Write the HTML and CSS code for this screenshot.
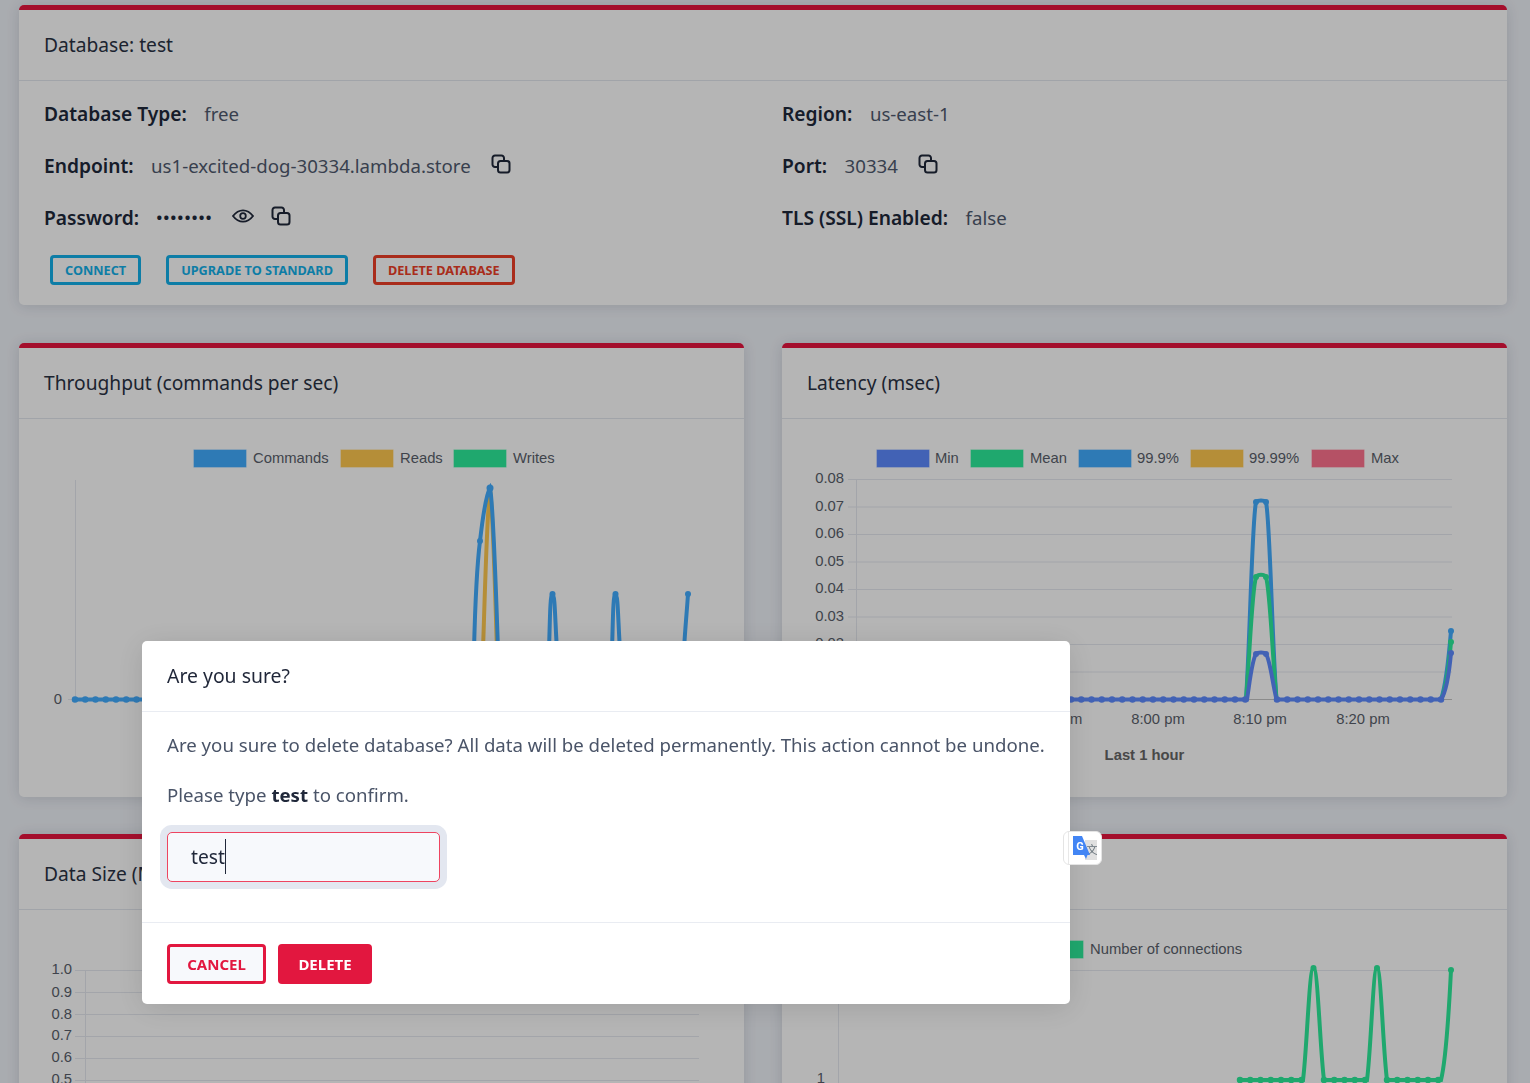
FILE: index.html
```html
<!DOCTYPE html>
<html lang="en">

<head>
    <meta charset="UTF-8">
    <title>Database: test</title>
    <link rel="stylesheet" href="styles.css">
</head>

<body>

    <div class="page">

        <section class="card card-wide">
            <div class="card-header">Database: test</div>
            <div class="card-body info">
                <div class="info-grid">
                    <div class="info-row"><b>Database Type:</b><span>free</span></div>
                    <div class="info-row"><b>Region:</b><span>us-east-1</span></div>
                    <div class="info-row">
                        <b>Endpoint:</b><span>us1-excited-dog-30334.lambda.store</span>
                        <svg class="icon" viewBox="0 0 20 20"><use href="#copy"/></svg>
                    </div>
                    <div class="info-row">
                        <b>Port:</b><span>30334</span>
                        <svg class="icon" viewBox="0 0 20 20"><use href="#copy"/></svg>
                    </div>
                    <div class="info-row">
                        <b>Password:</b><span class="dots">••••••••</span>
                        <svg class="icon eye" viewBox="0 0 22 14">
                            <path d="M1 7C4 3 7 1.300 11 1.300S18 3 21 7C18 11 15 12.700 11 12.700S4 11 1 7Z" fill="none" stroke="currentColor" stroke-width="1.800"/>
                            <circle cx="11" cy="7" r="2.800" fill="none" stroke="currentColor" stroke-width="1.800"/>
                        </svg>
                        <svg class="icon icon-tight" viewBox="0 0 20 20"><use href="#copy"/></svg>
                    </div>
                    <div class="info-row"><b>TLS (SSL) Enabled:</b><span>false</span></div>
                </div>
                <div class="actions">
                    <button class="btn-outline">CONNECT</button>
                    <button class="btn-outline">UPGRADE TO STANDARD</button>
                    <button class="btn-outline btn-danger">DELETE DATABASE</button>
                </div>
            </div>
        </section>

        <section class="card card-chart">
            <div class="card-header">Throughput (commands per sec)</div>
            <div class="card-body">
                <svg class="chart" viewBox="19 419 725 378">
                    <g class="grid">
                        <path d="M75.500 480V700M68 699.500H700"/>
                    </g>
                    <g class="legend">
                        <rect x="193.500" y="449.500" width="53" height="18" fill="#42acff"/>
                        <text x="253" y="463">Commands</text>
                        <rect x="340.500" y="449.500" width="53" height="18" fill="#ffc94f"/>
                        <text x="400" y="463">Reads</text>
                        <rect x="453.500" y="449.500" width="53" height="18" fill="#2ded9c"/>
                        <text x="513" y="463">Writes</text>
                    </g>
                    <text class="tick" x="62" y="704">0</text>
                    <path class="line" stroke="#ffc94f" d="M483 650C485 590 487 510 490 490C493 510 495 590 497 650"/>
                    <path class="line" stroke="#42acff" d="M474 650C475 610 477 565 480 541C483 515 486 495 490 488C493 500 496 590 498 650M549 650C550 620 550 594 552.500 594C555 594 555 620 557 650M612 650C613 620 613 594 615.500 594C618 594 618 620 620 650M684 650C685 630 687 610 688 594M75 699.500H145"/>
                    <path class="dots-line" stroke="#42acff" d="M75 699.500H145"/>
                    <g fill="#42acff">
                        <circle cx="480" cy="541" r="3"/>
                        <circle cx="490" cy="488" r="3.500"/>
                        <circle cx="552.500" cy="594" r="3"/>
                        <circle cx="615.500" cy="594" r="3"/>
                        <circle cx="688" cy="594" r="3"/>
                    </g>
                </svg>
            </div>
        </section>

        <section class="card card-chart">
            <div class="card-header">Latency (msec)</div>
            <div class="card-body">
                <svg class="chart" viewBox="782 419 725 378">
                    <g class="grid">
                        <path d="M856.500 480V700M848 479.500H1452M848 507H1452M848 534.500H1452M848 562H1452M848 589.500H1452M848 617H1452M848 644.500H1452M848 672H1452"/>
                        <path class="baseline" d="M848 699.500H1452"/>
                    </g>
                    <g class="legend">
                        <rect x="876.500" y="449.500" width="53" height="18" fill="#5e8bff"/>
                        <text x="935" y="463">Min</text>
                        <rect x="970.500" y="449.500" width="53" height="18" fill="#2ded9c"/>
                        <text x="1030" y="463">Mean</text>
                        <rect x="1078.500" y="449.500" width="53" height="18" fill="#42acff"/>
                        <text x="1137" y="463">99.9%</text>
                        <rect x="1190.500" y="449.500" width="53" height="18" fill="#ffc94f"/>
                        <text x="1249" y="463">99.99%</text>
                        <rect x="1311.500" y="449.500" width="53" height="18" fill="#ff738f"/>
                        <text x="1371" y="463">Max</text>
                    </g>
                    <g class="tick">
                        <text x="844" y="483">0.08</text>
                        <text x="844" y="511">0.07</text>
                        <text x="844" y="538">0.06</text>
                        <text x="844" y="566">0.05</text>
                        <text x="844" y="593">0.04</text>
                        <text x="844" y="621">0.03</text>
                        <text x="844" y="648">0.02</text>
                    </g>
                    <g class="tick-x">
                        <text x="1055.500" y="724">7:50 pm</text>
                        <text x="1158" y="724">8:00 pm</text>
                        <text x="1260" y="724">8:10 pm</text>
                        <text x="1363" y="724">8:20 pm</text>
                    </g>
                    <text class="axis-title" x="1144.500" y="760">Last 1 hour</text>
                    <path class="line" stroke="#42acff" d="M1246 699.500C1250 640 1252 520 1256 502C1258 500 1264 500 1266 502C1270 520 1272 640 1276.500 699.500M1441 699.500C1446 685 1449 655 1451 631"/>
                    <path class="line" stroke="#2ded9c" d="M1246 699.500C1250 650 1252 590 1256 577C1258 574 1264 574 1266 577C1270 590 1272 650 1276.500 699.500M1441 699.500C1446 690 1449 665 1451 642"/>
                    <path class="line" stroke="#5e8bff" d="M1071 699.500H1247C1250 680 1252 660 1256 654C1258 652 1264 652 1266 654C1270 660 1272 680 1276.500 699.500H1441C1446 692 1449 675 1451 653"/>
                    <path class="dots-line" stroke="#5e8bff" d="M1071 699.500H1247M1277 699.500H1442"/>
                    <g fill="#42acff">
                        <circle cx="1256" cy="502" r="3"/>
                        <circle cx="1266" cy="502" r="3"/>
                        <circle cx="1451" cy="631" r="3"/>
                    </g>
                    <g fill="#2ded9c">
                        <circle cx="1256" cy="577" r="3"/>
                        <circle cx="1266" cy="577" r="3"/>
                        <circle cx="1451" cy="642" r="3"/>
                    </g>
                    <g fill="#5e8bff">
                        <circle cx="1256" cy="654" r="3"/>
                        <circle cx="1266" cy="654" r="3"/>
                        <circle cx="1451" cy="653" r="3"/>
                    </g>
                </svg>
            </div>
        </section>

        <section class="card card-chart card-low">
            <div class="card-header">Data Size (MB)</div>
            <div class="card-body">
                <svg class="chart" viewBox="19 910 725 378">
                    <g class="grid">
                        <path d="M85.500 970V1083M75 970.500H699M75 992.500H699M75 1014.500H699M75 1036.500H699M75 1058.500H699M75 1080.500H699"/>
                    </g>
                    <g class="tick">
                        <text x="72" y="974">1.0</text>
                        <text x="72" y="997">0.9</text>
                        <text x="72" y="1019">0.8</text>
                        <text x="72" y="1040">0.7</text>
                        <text x="72" y="1062">0.6</text>
                        <text x="72" y="1084">0.5</text>
                    </g>
                </svg>
            </div>
        </section>

        <section class="card card-chart card-low">
            <div class="card-header">Connections</div>
            <div class="card-body">
                <svg class="chart" viewBox="782 910 725 378">
                    <g class="grid">
                        <path d="M838.500 960V1083M838 970.500H1452"/>
                    </g>
                    <g class="legend">
                        <rect x="1030.500" y="940.500" width="53" height="18" fill="#2ded9c"/>
                        <text x="1090" y="954">Number of connections</text>
                    </g>
                    <text class="tick" x="825" y="1083">1</text>
                    <path class="line" stroke="#2ded9c" d="M1240 1080H1303C1307 1050 1309 968 1313.500 968C1318 968 1320 1050 1324 1080H1367C1371 1050 1373 968 1377 968C1381 968 1383 1050 1387 1080H1441C1446 1060 1449 1010 1451 970"/>
                    <path class="dots-line" stroke="#2ded9c" d="M1240 1080H1303M1324 1080H1367M1387 1080H1441"/>
                    <g fill="#2ded9c">
                        <circle cx="1313.500" cy="968" r="3"/>
                        <circle cx="1377" cy="968" r="3"/>
                        <circle cx="1451" cy="970" r="3"/>
                    </g>
                </svg>
            </div>
        </section>

    </div>

    <div class="overlay">
        <div class="modal">
            <div class="modal-header">Are you sure?</div>
            <div class="modal-body">
                <p>Are you sure to delete database? All data will be deleted permanently. This action cannot be undone.</p>
                <p>Please type <b>test</b> to confirm.</p>
                <div class="fake-input"><span class="caret">test</span></div>
            </div>
            <div class="modal-footer">
                <button class="btn-cancel">CANCEL</button>
                <button class="btn-delete">DELETE</button>
            </div>
        </div>
    </div>

    <!-- translate extension bubble -->
    <div class="translate">
        <svg viewBox="1 1 37 32" width="37" height="32">
            <path d="M5.500 1V33" fill="none" stroke="#e8e8e8"/>
            <rect x="22" y="9" width="12" height="20" fill="#e0e0e0"/>
            <text class="translate-zh" x="29" y="23">文</text>
            <path d="M10 5H19L27 24H24.500L23 28L21 24H10Z" fill="#4285f4"/>
            <text class="translate-g" x="17" y="19">G</text>
        </svg>
    </div>

    <svg class="defs" width="0" height="0">
        <symbol id="copy" viewBox="0 0 20 20">
            <path d="M6 13H4A2.500 2.500 0 0 1 1.500 10.500V4A2.500 2.500 0 0 1 4 1.500H10.500A2.500 2.500 0 0 1 13 4V6" fill="none" stroke="currentColor" stroke-width="2"/>
            <rect x="7" y="7" width="11.500" height="11.500" rx="2.500" fill="none" stroke="currentColor" stroke-width="2"/>
        </symbol>
    </svg>

</body>

</html>
```

FILE: styles.css
```css
html,
body {
    height: 1083px;
    overflow: hidden;
}

body {
    margin: 0;
    background-color: #eff2f8;
    font-family: "Noto Sans", "Open Sans", sans-serif;
    font-size: 18.650px;
    color: #2a3244;
}

.page {
    display: grid;
    grid-template-columns: 725px 725px;
    grid-template-rows: 300px 454px 400px;
    gap: 38px;
    row-gap: 38px;
    padding: 5px 23px 0 19px;
}

.card {
    background-color: #fff;
    border-top: 5px solid #e8153f;
    border-radius: 5px;
    box-shadow: 0 1px 14px rgba(30, 40, 60, 0.14);
}

.card-wide {
    grid-column: 1 / 3;
}

.card-low {
    margin-top: -1px;
}

.card-header {
    box-sizing: border-box;
    height: 71px;
    padding: 0 25px;
    font-size: 19.200px;
    line-height: 70px;
    border-bottom: 1px solid #e3e7ee;
}

.card-body.info {
    padding: 6px 25px 0;
}

.info-grid {
    display: grid;
    grid-template-columns: 738px 1fr;
}

.info-row {
    display: flex;
    align-items: center;
    height: 52px;
}

.info-row b {
    font-size: 19.200px;
    font-weight: 600;
    color: #20283a;
    margin-right: 17.500px;
}

.info-row span {
    color: #4f5a6e;
}

.info-row .dots {
    font-size: 15px;
    font-weight: 700;
    letter-spacing: 1.400px;
    color: #20283a;
}

.icon {
    width: 20px;
    height: 20px;
    margin: -2px 0 0 20px;
    color: #20283a;
}

.eye {
    width: 22px;
    height: 14px;
    margin-left: 19px;
}

.icon-tight {
    margin-left: 17px;
}

.actions {
    display: flex;
    gap: 25px;
    padding: 12px 0 0 6px;
}

button {
    font-family: "Noto Sans", "Open Sans", sans-serif;
    font-weight: 700;
}

.btn-outline {
    height: 30px;
    padding: 0 12px;
    background: transparent;
    border: 3px solid #13b1ea;
    border-radius: 4px;
    color: #13b1ea;
    font-size: 12.700px;
}

.btn-danger {
    border-color: #ee3e27;
    color: #ee3e27;
}

.chart {
    display: block;
    width: 725px;
    height: 378px;
    font-family: "Liberation Sans", Arial, sans-serif;
    font-size: 14.800px;
}

.grid path {
    fill: none;
    stroke: #e6e9f0;
    stroke-width: 1;
}

.grid .baseline {
    stroke: #c4c4c4;
}

.legend rect {
    stroke: rgba(255, 255, 255, 0.35);
    stroke-width: 1;
}

.legend text {
    fill: #5a5f6b;
}

.tick,
.tick text {
    fill: #5a5f6b;
    text-anchor: end;
}

.tick-x text {
    fill: #5a5f6b;
    text-anchor: middle;
}

.axis-title {
    fill: #666;
    font-weight: 700;
    text-anchor: middle;
}

.line {
    fill: none;
    stroke-width: 4;
}

.dots-line {
    fill: none;
    stroke-width: 6.500;
    stroke-linecap: round;
    stroke-dasharray: 0 10.250;
}

.overlay {
    position: fixed;
    top: 0;
    left: 0;
    width: 100%;
    height: 100%;
    background-color: rgba(0, 0, 0, 0.29);
}

.modal {
    position: absolute;
    top: 641px;
    left: 142px;
    width: 928px;
    height: 363px;
    background-color: #fff;
    border-radius: 5px;
    box-shadow: 0 4px 30px rgba(0, 0, 0, 0.12);
}

.modal-header {
    box-sizing: border-box;
    height: 71px;
    padding: 0 25px;
    font-size: 19.400px;
    line-height: 70px;
    color: #1f2638;
    border-bottom: 1px solid #e9ecf2;
}

.modal-body {
    box-sizing: border-box;
    height: 211px;
    padding: 8px 25px 0;
    color: #4a5468;
    border-bottom: 1px solid #e9ecf2;
}

.modal-body p {
    margin: 0;
    height: 50px;
    line-height: 50px;
    white-space: nowrap;
}

.modal-body b {
    font-weight: 700;
    color: #20283a;
}

.fake-input {
    box-sizing: border-box;
    width: 273px;
    height: 50px;
    margin-top: 12px;
    padding-left: 23px;
    font-size: 19.200px;
    line-height: 48px;
    color: #20283a;
    background-color: #f7f9fc;
    border: 1px solid #ee4460;
    border-radius: 5px;
    box-shadow: 0 0 0 7px #e3e7f0;
}

.caret {
    border-right: 1px solid #20283a;
    padding: 4px 0;
}

.modal-footer {
    display: flex;
    gap: 12px;
    padding: 21px 25px;
}

.btn-cancel,
.btn-delete {
    height: 40px;
    font-size: 15px;
    border-radius: 4px;
}

.btn-cancel {
    width: 99px;
    background-color: #f7f9fc;
    border: 3px solid #e2173f;
    color: #e2173f;
}

.btn-delete {
    width: 94px;
    background-color: #e2173f;
    border: none;
    color: #fff;
}

.translate {
    position: absolute;
    top: 831px;
    left: 1063px;
    box-sizing: border-box;
    width: 39px;
    height: 34px;
    background-color: #fff;
    border: 1px solid #e4e4e4;
    border-radius: 6px;
}

.translate svg {
    display: block;
}

.translate-g {
    font-family: "Roboto", sans-serif;
    font-size: 11px;
    font-weight: 700;
    fill: #fff;
    text-anchor: middle;
}

.translate-zh {
    font-family: "Noto Sans CJK SC", sans-serif;
    font-size: 11px;
    fill: #66727a;
    text-anchor: middle;
}

.defs {
    position: absolute;
}
```
